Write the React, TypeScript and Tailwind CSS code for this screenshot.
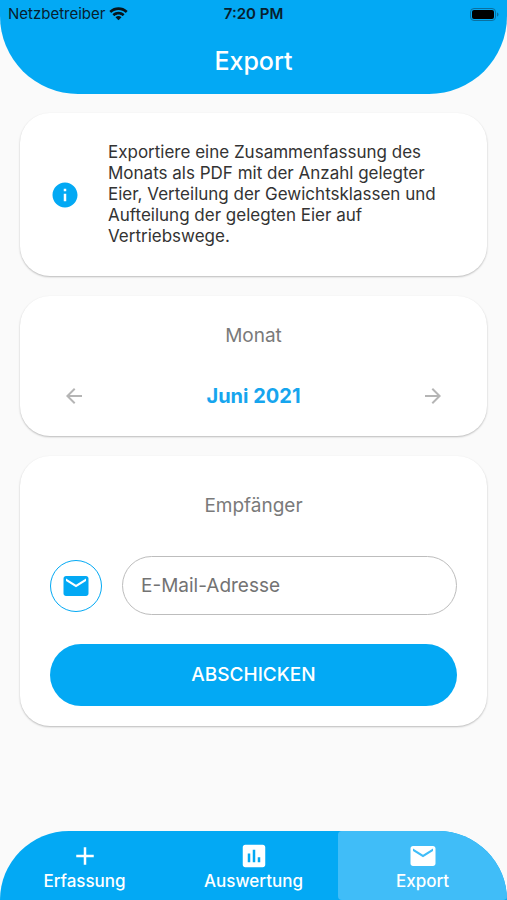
import React, { useState } from "react";
import {
  MdAdd,
  MdArrowBack,
  MdArrowForward,
  MdAssessment,
  MdEmail,
  MdInfo,
} from "react-icons/md";

const months = [
  "Januar",
  "Februar",
  "März",
  "April",
  "Mai",
  "Juni",
  "Juli",
  "August",
  "September",
  "Oktober",
  "November",
  "Dezember",
];

const tabs = [
  { label: "Erfassung", icon: MdAdd },
  { label: "Auswertung", icon: MdAssessment },
  { label: "Export", icon: MdEmail },
];

function StatusBar() {
  return (
    <div className="grid grid-cols-3 items-center h-7 px-2 text-[15px] text-[#07202e]">
      <div className="flex items-center gap-1">
        <span>Netzbetreiber</span>
        <svg width="19" height="14" viewBox="0 0 18 13" fill="#07151d">
          <path d="M9 2.7c2.5 0 4.8.9 6.6 2.6.1.1.3.1.5 0l1.3-1.3c.2-.2.2-.4 0-.5C12.7-.9 5.3-.9.6 3.5c-.2.1-.2.3 0 .5l1.3 1.3c.2.1.4.1.5 0C4.2 3.6 6.5 2.7 9 2.7z" />
          <path d="M9 6.9c1.4 0 2.7.5 3.7 1.4.2.2.4.2.5 0l1.3-1.3c.2-.2.2-.4 0-.5-3.1-2.9-7.9-2.9-11 0-.2.1-.2.3 0 .5l1.3 1.3c.1.2.3.2.5 0 1-.9 2.3-1.4 3.7-1.4z" />
          <path d="M11.6 9.4c.2.1.2.3 0 .5l-2.3 2.4c-.2.2-.4.2-.6 0L6.4 9.9c-.2-.2-.2-.4 0-.5 1.5-1.3 3.7-1.3 5.2 0z" />
        </svg>
      </div>
      <span className="text-center font-semibold">7:20 PM</span>
      <svg className="justify-self-end" width="29" height="13" viewBox="0 0 29 13">
        <rect x="0.5" y="0.5" width="25" height="12" rx="3.5" fill="none" stroke="#0b6f9f" />
        <rect x="2" y="2" width="22" height="9" rx="2" fill="#000" />
        <path d="M27 4.5v4c.9-.3 1.5-1.1 1.5-2s-.6-1.7-1.5-2z" fill="#0b6f9f" />
      </svg>
    </div>
  );
}

function Card({ className, children }: { className: string; children: React.ReactNode }) {
  return (
    <section className={`rounded-[30px] bg-white px-[30px] shadow-[0_1px_2px_rgba(0,0,0,0.26)] ${className}`}>
      {children}
    </section>
  );
}

export default function App() {
  // Months counted from year 0, so stepping over a year needs no special case
  const [month, setMonth] = useState(2021 * 12 + 5);
  const [email, setEmail] = useState("");
  const [active, setActive] = useState("Export");

  return (
    <div className="flex min-h-screen flex-col bg-[#fafafa] font-['Inter',sans-serif]">
      <header className="rounded-b-[78px] bg-[#03a9f4] pb-[18px]">
        <StatusBar />
        <h1 className="pt-[18px] text-center text-[25px] leading-[30px] font-medium text-white">Export</h1>
      </header>

      <main className="flex flex-1 flex-col gap-5 px-5 py-[19px]">
        <Card className="flex items-center gap-7 py-[29px]">
          <MdInfo className="shrink-0 text-[#03a9f4]" size={30} />
          <p className="text-[17px] leading-[21px] text-[#333333]">
            Exportiere eine Zusammenfassung des Monats als PDF mit der Anzahl gelegter Eier, Verteilung der
            Gewichtsklassen und Aufteilung der gelegten Eier auf Vertriebswege.
          </p>
        </Card>

        <Card className="pt-7 pb-4">
          <h2 className="text-center text-[19px] leading-6 text-[#7a7a7a]">Monat</h2>
          <div className="mt-6 flex items-center justify-between">
            <button
              type="button"
              aria-label="Vorheriger Monat"
              className="grid size-12 place-items-center text-[#b5b5b5]"
              onClick={() => setMonth(month - 1)}
            >
              <MdArrowBack size={24} />
            </button>
            <span className="text-xl font-bold text-[#16a5ee]">
              {months[month % 12]} {Math.floor(month / 12)}
            </span>
            <button
              type="button"
              aria-label="Nächster Monat"
              className="grid size-12 place-items-center text-[#b5b5b5]"
              onClick={() => setMonth(month + 1)}
            >
              <MdArrowForward size={24} />
            </button>
          </div>
        </Card>

        <Card className="pt-[38px] pb-5">
          <h2 className="text-center text-[19px] leading-6 text-[#7a7a7a]">Empfänger</h2>
          <form onSubmit={(e) => e.preventDefault()}>
            <div className="mt-[38px] flex items-center gap-5">
              <label
                htmlFor="email"
                className="grid size-[52px] shrink-0 place-items-center rounded-full border border-[#03a9f4] text-[#03a9f4]"
              >
                <MdEmail size={30} />
              </label>
              <input
                id="email"
                type="email"
                aria-label="E-Mail-Adresse"
                placeholder="E-Mail-Adresse"
                value={email}
                onChange={(e) => setEmail(e.target.value)}
                className="h-[59px] min-w-0 flex-1 rounded-full border border-[#bdbdbd] px-[18px] text-[19px] text-[#333333] outline-none placeholder:text-[#737373]"
              />
            </div>
            <button
              type="submit"
              className="mt-[29px] h-[62px] w-full rounded-full bg-[#03a9f4] text-[19px] font-medium text-white"
            >
              ABSCHICKEN
            </button>
          </form>
        </Card>
      </main>

      <nav className="grid h-[69px] grid-cols-3 overflow-hidden rounded-t-[69px] bg-[#03a9f4] text-white">
        {tabs.map(({ label, icon: Icon }) => (
          <button
            key={label}
            type="button"
            onClick={() => setActive(label)}
            className={`flex flex-col items-center pt-[10px] text-[17px] leading-5 font-medium ${
              active === label ? "rounded bg-[#40bdf8]" : ""
            }`}
          >
            <Icon size={30} />
            {label}
          </button>
        ))}
      </nav>
    </div>
  );
}
